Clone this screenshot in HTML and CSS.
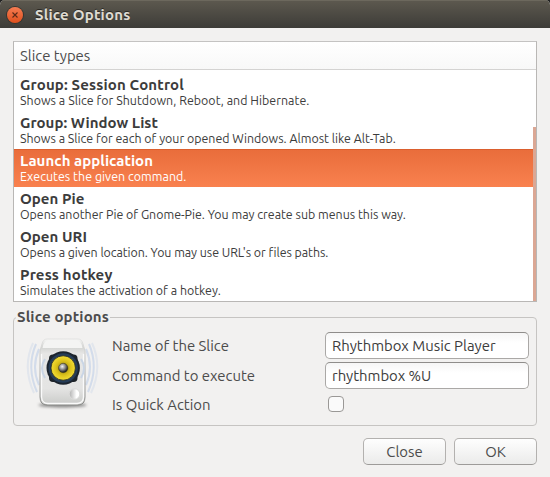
FILE: index.html
```html
<!DOCTYPE html>
<html lang="en">
<head>
<meta charset="utf-8">
<title>Slice Options</title>
<link rel="stylesheet" href="styles.css">
</head>
<body>
<div class="window">
  <header class="titlebar">
    <span class="close-dot"><svg width="16" height="16" viewBox="0 0 16 16"><path d="M5.500 5.500l5 5M10.500 5.500l-5 5" stroke="#5b2a18" stroke-width="1.100" fill="none"/></svg></span>
    <span class="title">Slice Options</span>
  </header>
  <main class="content">
    <section class="list">
      <div class="list-head"><span>Slice types</span></div>
      <div class="rows">
        <div class="row"><b>Group: Session Control</b><span class="wide">Shows a Slice for Shutdown, Reboot, and Hibernate.</span></div>
        <div class="row"><b class="tight">Group: Window List</b><span>Shows a Slice for each of your opened Windows. Almost like Alt-Tab.</span></div>
        <div class="row selected"><b class="tight">Launch application</b><span class="wide">Executes the given command.</span></div>
        <div class="row"><b class="tight">Open Pie</b><span>Opens another Pie of Gnome-Pie. You may create sub menus this way.</span></div>
        <div class="row"><b class="tight">Open URI</b><span class="narrow">Opens a given location. You may use URL's or files paths.</span></div>
        <div class="row"><b>Press hotkey</b><span>Simulates the activation of a hotkey.</span></div>
      </div>
      <i class="scroll"></i>
    </section>
    <fieldset class="options">
      <legend>Slice options</legend>
      <div class="icon">
        <svg width="80" height="80" viewBox="0 0 80 80">
          <defs>
            <linearGradient id="body" x1="0" y1="0" x2="0" y2="1"><stop offset="0" stop-color="#f8f8f7"/><stop offset=".12" stop-color="#d2d3d1"/><stop offset=".22" stop-color="#e6e6e5"/><stop offset=".75" stop-color="#e4e4e3"/><stop offset="1" stop-color="#c9cac8"/></linearGradient>
            <linearGradient id="edge" x1="0" y1="0" x2="0" y2="1"><stop offset="0" stop-color="#e2e2e1"/><stop offset=".4" stop-color="#b9bab8"/><stop offset="1" stop-color="#8a8b89"/></linearGradient>
            <linearGradient id="knob" x1="0" y1="0" x2="1" y2="0"><stop offset="0" stop-color="#b0b0b0"/><stop offset=".7" stop-color="#fff"/></linearGradient>
            <radialGradient id="cone" cx=".5" cy=".5" r=".5"><stop offset=".25" stop-color="#b09a14"/><stop offset=".6" stop-color="#dcc21b"/><stop offset="1" stop-color="#f3dd35"/></radialGradient>
            <radialGradient id="ball" cx=".4" cy=".35" r=".6"><stop offset="0" stop-color="#f4f4f4"/><stop offset=".55" stop-color="#888"/><stop offset="1" stop-color="#252525"/></radialGradient>
            <filter id="soft" x="-20%" y="-100%" width="140%" height="300%"><feGaussianBlur stdDeviation="1.600"/></filter>
          </defs>
          <ellipse cx="40.500" cy="75" rx="24" ry="2.500" fill="#555" opacity=".65" filter="url(#soft)"/>
          <g fill="none" stroke="#b4c7e5" stroke-width="2">
            <path d="M17 19Q9 37 17 55" opacity=".5"/><path d="M14 14Q4 37 15 62" opacity=".5"/><path d="M11 13Q0 37 12 63" opacity=".25"/>
            <path d="M64 19Q72 37 64 55" opacity=".5"/><path d="M67 14Q77 37 66 62" opacity=".5"/><path d="M70 13Q81 37 69 63" opacity=".25"/>
          </g>
          <path d="M25 9H56Q60 9 61 14L63 21V67Q63 75 56 75H25Q18 75 18 67V21L20 14Q21 9 25 9Z" fill="url(#body)" stroke="url(#edge)"/>
          <path d="M20.500 18Q22 10 27 10H54Q59 10 60.500 18Z" fill="#f4f4f3"/>
          <path d="M19.500 24V67Q20 73.500 26 73.500H55Q61.500 73 61.500 67V24" fill="none" stroke="#fafafa" stroke-width="1.300"/>
          <path d="M23 29Q17 38 23 48M59 29Q65 38 59 48" fill="none" stroke="#c9d5e5" stroke-width="2"/>
          <rect x="27" y="24.500" width="28.500" height="27.500" rx="4" fill="#1d2226"/>
          <circle cx="41.200" cy="38" r="16.700" fill="#1c242e"/>
          <circle cx="41.200" cy="38" r="14.700" fill="#263d58"/>
          <circle cx="41.200" cy="38" r="12.200" fill="url(#cone)" stroke="#151a1d" stroke-width=".7"/>
          <circle cx="41.200" cy="38" r="4.700" fill="url(#ball)" stroke="#3b3510" stroke-width=".5"/>
          <circle cx="52.500" cy="64" r="5.300" fill="url(#knob)" stroke="#dcdcdb"/>
          <circle cx="26.500" cy="65.500" r="1.400" fill="#d9d9d8"/>
        </svg>
      </div>
      <div class="form">
        <label for="name">Name of the Slice</label><input class="entry" id="name" value="Rhythmbox Music Player">
        <label for="cmd">Command to execute</label><input class="entry" id="cmd" value="rhythmbox %U">
        <label class="last" for="quick">Is Quick Action</label><input class="check" id="quick" type="checkbox">
      </div>
    </fieldset>
    <footer class="actions">
      <button type="button">Close</button><button type="button">OK</button>
    </footer>
  </main>
</div>
</body>
</html>
```
FILE: styles.css
```css
* { box-sizing: border-box; }
body { margin: 0; background: #222; font: 14.9px/20px "Ubuntu", "Noto Sans", sans-serif; color: #4c4c4c; }
.window { width: 550px; height: 477px; background: #f2f1f0; border-radius: 5px 5px 0 0; overflow: hidden; }
.titlebar { height: 28px; display: flex; align-items: center; padding: 2px 7px 0; background: linear-gradient(#5d594f, #3d3c38); box-shadow: inset 0 1px #6c685d; }
.close-dot { width: 16px; height: 16px; border-radius: 50%; background: linear-gradient(#f57c52, #e0501d); box-shadow: 0 0 0 1px #38352f; }
.close-dot svg { display: block; }
.title { margin-left: 12px; font-size: 15px; font-weight: 700; letter-spacing: .2px; color: #dfdbd2; text-shadow: 0 -1px #292824; }
.content { padding: 13px 13px 0; }
.list { position: relative; width: 524px; height: 261px; border: 1px solid #b9b7b5; border-top-color: #c4c3c2; background: #fff; overflow: hidden; }
.list-head { height: 28px; padding: 4px 6px 0; border-bottom: 1px solid #d4d3d2; background: linear-gradient(#fff, #f8f8f8); }
.rows { padding-top: 3px; }
.row { height: 38px; padding: 3px 6px 0; color: #3c3c3c; white-space: nowrap; }
.row b, .row span { display: block; }
.row b { font-size: 15px; line-height: 18px; letter-spacing: .15px; }
.row .tight { letter-spacing: .04px; }
.row span { font-size: 12.4px; line-height: 13px; }
.row .wide { letter-spacing: .04px; }
.row .narrow { letter-spacing: -.05px; }
.selected { color: #fff; background: linear-gradient(#e96d3b, #f9814f); border-top: 1px solid #db5f2e; padding-top: 2px; }
.scroll { position: absolute; right: 0; top: 85px; width: 3px; height: 175px; background: #dba794; }
.options { position: relative; display: flex; width: 524px; height: 118px; margin: 6px 0 0; padding: 0; border: 1px solid #c6c4c2; border-radius: 4px; }
.options legend { margin-left: 2px; padding: 0 1px; height: 18px; font-size: 15px; font-weight: 700; letter-spacing: .15px; line-height: 18px; }
.icon { position: absolute; left: 8px; top: 4px; width: 80px; height: 80px; }
.icon svg { display: block; }
.form { display: grid; grid-template-columns: 213px 204px; grid-template-rows: 27px 27px 27px; row-gap: 3px; margin: 6px 0 0 98px; }
.form label { line-height: 28px; white-space: nowrap; }
.form .last { line-height: 26px; }
.entry { width: 204px; height: 27px; margin: 0; padding: 0 6px; border: 1px solid #aaa8a6; border-top-color: #8f8d8b; border-radius: 5px; background: linear-gradient(#f6f6f6, #fff 40%); color: #3c3c3c; font: inherit; outline: 0; }
.check { appearance: none; width: 16px; height: 16px; margin: 4px 0 0 3px; border: 1px solid #9a9896; border-radius: 4px; background: #fafafa; }
.actions { display: flex; justify-content: flex-end; gap: 8px; margin-top: 12px; }
.actions button { width: 83px; height: 27px; padding: 0; border: 1px solid #b3b1af; border-bottom-color: #9d9b99; border-radius: 5px; background: linear-gradient(#fefefe, #ebebea); color: #4c4c4c; font: inherit; }
```
